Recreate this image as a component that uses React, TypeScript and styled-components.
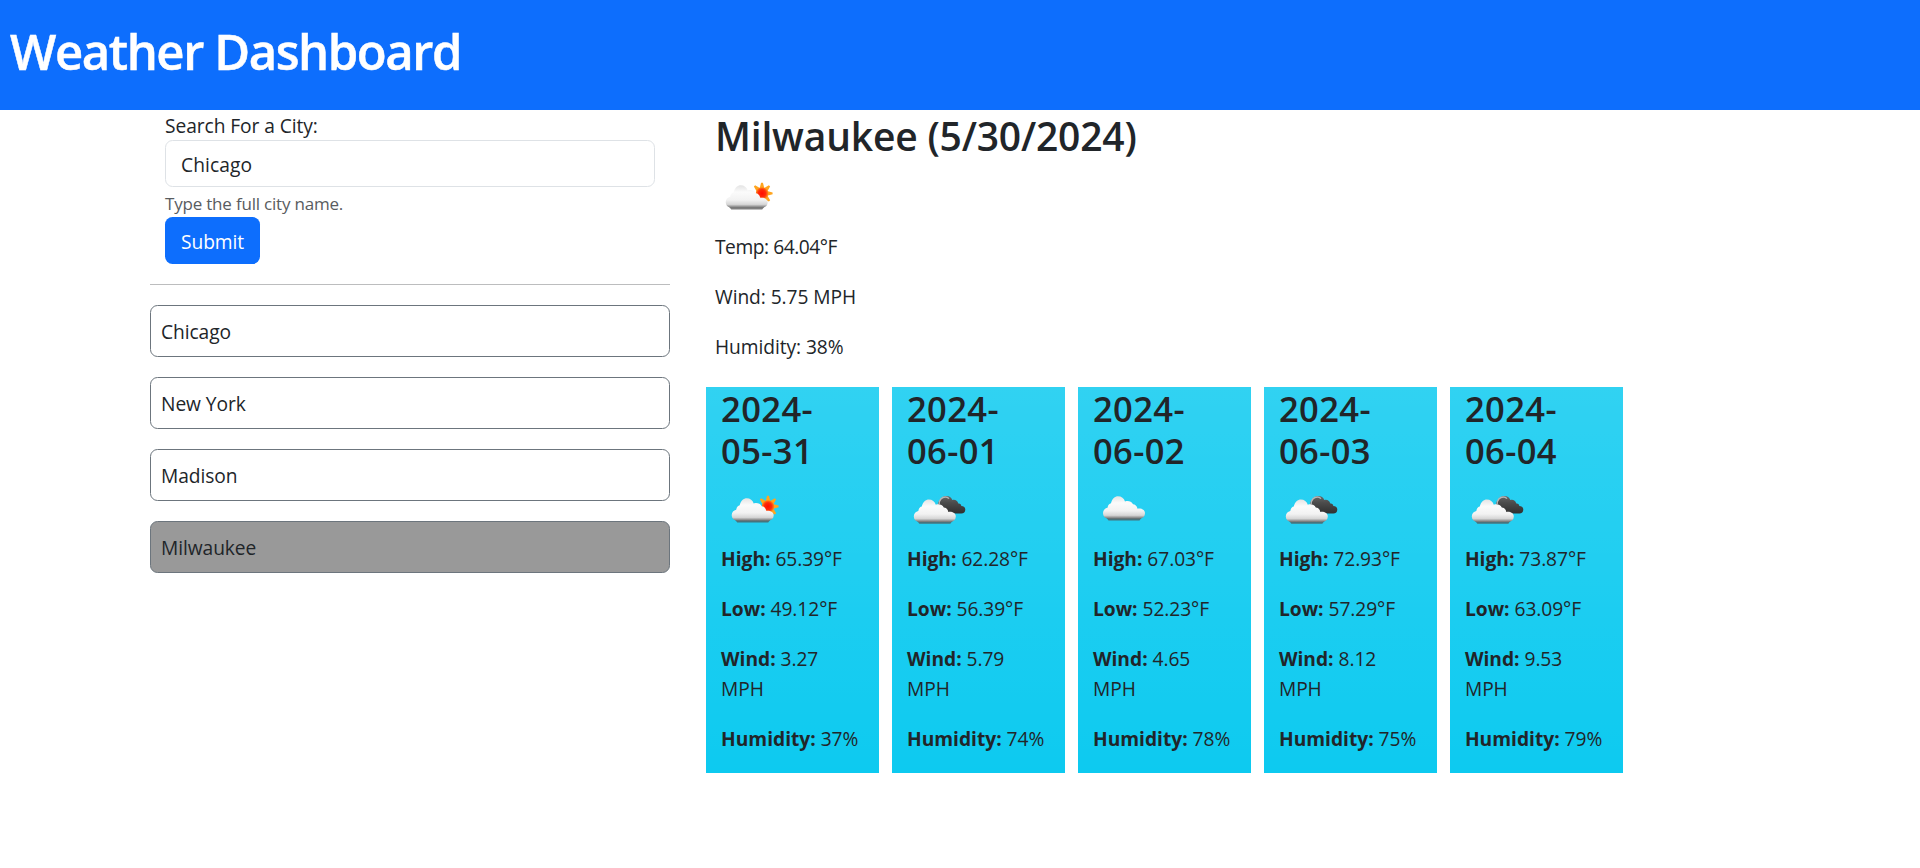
import React from 'react';
import styled, { createGlobalStyle } from 'styled-components';

const GlobalStyle = createGlobalStyle`
  *, *::before, *::after { box-sizing: border-box; }
  body {
    margin: 0;
    background: #fff;
    color: #212529;
    font-family: 'Open Sans', 'Noto Sans', sans-serif;
    font-size: 19.2px;
    font-weight: 400;
    line-height: 30px;
    letter-spacing: -0.07px;
  }
  h1, h2, h3, p { margin: 0; }
`;

const Header = styled.header`
  height: 110px;
  padding: 20px 10px;
  background: #0d6efd;
  color: #fff;
`;

const Title = styled.h1`
  font-size: 49px;
  font-weight: 600;
  line-height: 62px;
  letter-spacing: -1.43px;
  -webkit-text-stroke: 0.5px #fff;
`;

const Page = styled.main`
  display: flex;
  align-items: flex-start;
  padding-left: 150px;
`;

const Sidebar = styled.aside`
  width: 520px;
`;

const SearchForm = styled.form`
  display: flex;
  flex-direction: column;
  align-items: flex-start;
  padding: 0 15px;
`;

const Label = styled.label`
  height: 30px;
  padding-top: 1px;
`;

const SearchInput = styled.input`
  width: 100%;
  height: 47px;
  padding: 2px 15px 0;
  border: 1px solid #dee2e6;
  border-radius: 7.5px;
  background: #fff;
  color: #212529;
  font: inherit;
  letter-spacing: 0.1px;
  outline: none;
`;

const Hint = styled.span`
  height: 30px;
  padding-top: 2px;
  color: #595c5f;
  font-size: 17px;
  letter-spacing: -0.2px;
`;

const SubmitButton = styled.button`
  width: 95px;
  height: 47px;
  padding: 2px 0 0;
  border: 0;
  border-radius: 7.5px;
  background: #0d6efd;
  color: #fff;
  font: inherit;
  letter-spacing: -0.1px;
`;

const Divider = styled.hr`
  height: 1px;
  margin: 20px 0;
  border: 0;
  background: #bcbdbe;
`;

const CityList = styled.div`
  display: flex;
  flex-direction: column;
  gap: 20px;
`;

const City = styled.div<{ $active?: boolean }>`
  height: 52px;
  padding: 11px 10px 9px;
  border: 1px solid #6c757d;
  border-radius: 7.5px;
  background: ${({ $active }) => ($active ? '#999' : '#fff')};
`;

const Weather = styled.section`
  margin-left: 36px;
`;

const Current = styled.div`
  padding-left: 9px;
`;

const CityHeading = styled.h2`
  height: 58px;
  font-size: 39px;
  font-weight: 600;
  line-height: 52px;
  letter-spacing: -0.19px;
`;

const Reading = styled.p<{ $tight?: boolean }>`
  margin-bottom: 20px;
  letter-spacing: ${({ $tight }) => ($tight ? '-0.45px' : 'inherit')};
`;

const IconSvg = styled.svg`
  display: block;
  width: 62.5px;
  height: 62.5px;
`;

const CurrentIcon = styled.div`
  padding-bottom: 1px;
`;

const Forecast = styled.div`
  display: grid;
  grid-template-columns: repeat(5, 173.3px);
  column-gap: 12.7px;
  margin-top: 25.5px;
`;

const Card = styled.article`
  height: 386px;
  padding: 0 15px;
  background: linear-gradient(rgba(255, 255, 255, 0.15), rgba(255, 255, 255, 0)) #0dcaf0;
`;

const CardDate = styled.h3`
  height: 94px;
  padding-top: 1px;
  font-size: 34.5px;
  font-weight: 600;
  line-height: 42px;
  letter-spacing: 0.4px;
`;

const Name = styled.strong`
  font-weight: 700;
  letter-spacing: 0;
`;

type Sky = 'partly' | 'broken' | 'cloudy';

const CLOUD =
  'M5 22.5C2 22 0 20 0 17C0 14 2 12 4.5 11.5C5 8.5 6.5 7.3 8 7C9 2.5 12 0 15 0C18.5 0 21 2 22 5.2C25 4 28.5 5 30 8C32 8 34 9.5 34.5 12.5C38 11.8 42 13.5 42 17C42 20 40 22 37 22.5Z';

function WeatherIcon({ sky, id }: { sky: Sky; id: string }) {
  const offset =
    sky === 'broken' ? 'translate(6.8 18.5)' : sky === 'cloudy' ? 'translate(10 15.2)' : 'translate(10.7 17.3)';
  return (
    <IconSvg viewBox="0 0 62.5 62.5" aria-hidden="true">
      <defs>
        <linearGradient id={`${id}-w`} x1="0" y1="0" x2="0" y2="1">
          <stop offset="0" stopColor="#e4e4e4" />
          <stop offset="0.3" stopColor="#fbfbfb" />
          <stop offset="0.65" stopColor="#f2f2f2" />
          <stop offset="0.85" stopColor="#d6d6d6" />
          <stop offset="1" stopColor="#6e6e6e" />
        </linearGradient>
        <linearGradient id={`${id}-d`} x1="0" y1="0" x2="0" y2="1">
          <stop offset="0" stopColor="#666666" />
          <stop offset="0.4" stopColor="#4b4b4b" />
          <stop offset="1" stopColor="#303030" />
        </linearGradient>
        <radialGradient id={`${id}-s`}>
          <stop offset="0" stopColor="#ff0d00" />
          <stop offset="0.6" stopColor="#ff2b08" />
          <stop offset="1" stopColor="#ff8a1a" />
        </radialGradient>
        <filter id={`${id}-b`} x="-20%" y="-50%" width="140%" height="200%">
          <feGaussianBlur stdDeviation="0.6" />
        </filter>
      </defs>
      {sky === 'partly' && (
        <g>
          <g fill="#ffa51e">
            {[-135, -90, -45, 0, 45].map((a) => (
              <path key={a} d="M5 -2.4L10.6 -0.9V0.9L5 2.4Z" transform={`translate(47 25.4) rotate(${a})`} />
            ))}
          </g>
          <circle cx="47" cy="25.4" r="6.2" fill={`url(#${id}-s)`} />
        </g>
      )}
      {sky === 'broken' && (
        <g transform="translate(30.3 15)">
          <path
            d="M2 12C0 8 1 5 3 4C4 1 6.5 0 9 0C12 0 14 1.5 15 4C18 3.3 20 4.5 21 7.5C22.5 7.2 24 8 24 10C26.5 10 28 11.5 28 13.5C28 16 26.5 17.4 24 17.4H10Z"
            fill={`url(#${id}-d)`}
          />
          <path d="M1.8 8.4C1.6 4 4.6 1 8 1C9.5 1 10.8 1.6 11.6 2.6" fill="none" stroke="#b5b5b5" strokeWidth="1.5" />
        </g>
      )}
      <g transform={offset}>
        <path d="M3 21H39L36.5 24.2H5.5Z" fill="#555555" opacity="0.75" filter={`url(#${id}-b)`} />
        <path d={CLOUD} fill={`url(#${id}-w)`} />
      </g>
    </IconSvg>
  );
}

const cities = ['Chicago', 'New York', 'Madison', 'Milwaukee'];

const days: { date: [string, string]; sky: Sky; high: string; low: string; wind: string; humidity: string }[] = [
  { date: ['2024-', '05-31'], sky: 'partly', high: '65.39', low: '49.12', wind: '3.27', humidity: '37' },
  { date: ['2024-', '06-01'], sky: 'broken', high: '62.28', low: '56.39', wind: '5.79', humidity: '74' },
  { date: ['2024-', '06-02'], sky: 'cloudy', high: '67.03', low: '52.23', wind: '4.65', humidity: '78' },
  { date: ['2024-', '06-03'], sky: 'broken', high: '72.93', low: '57.29', wind: '8.12', humidity: '75' },
  { date: ['2024-', '06-04'], sky: 'broken', high: '73.87', low: '63.09', wind: '9.53', humidity: '79' },
];

export default function App() {
  return (
    <>
      <GlobalStyle />
      <Header>
        <Title>Weather Dashboard</Title>
      </Header>
      <Page>
        <Sidebar>
          <SearchForm onSubmit={(e) => e.preventDefault()}>
            <Label htmlFor="city">Search For a City:</Label>
            <SearchInput id="city" defaultValue="Chicago" />
            <Hint>Type the full city name.</Hint>
            <SubmitButton type="submit">Submit</SubmitButton>
          </SearchForm>
          <Divider />
          <CityList>
            {cities.map((city) => (
              <City key={city} $active={city === 'Milwaukee'}>
                {city}
              </City>
            ))}
          </CityList>
        </Sidebar>
        <Weather>
          <Current>
            <CityHeading>Milwaukee (5/30/2024)</CityHeading>
            <CurrentIcon>
              <WeatherIcon sky="partly" id="now" />
            </CurrentIcon>
            <Reading $tight>Temp: 64.04°F</Reading>
            <Reading>Wind: 5.75 MPH</Reading>
            <Reading>Humidity: 38%</Reading>
          </Current>
          <Forecast>
            {days.map((day, i) => (
              <Card key={i}>
                <CardDate>
                  {day.date[0]}
                  <br />
                  {day.date[1]}
                </CardDate>
                <WeatherIcon sky={day.sky} id={`day${i}`} />
                <Reading>
                  <Name>High:</Name> {day.high}°F
                </Reading>
                <Reading>
                  <Name>Low:</Name> {day.low}°F
                </Reading>
                <Reading>
                  <Name>Wind:</Name> {day.wind}
                  <br />
                  MPH
                </Reading>
                <Reading>
                  <Name>Humidity:</Name> {day.humidity}%
                </Reading>
              </Card>
            ))}
          </Forecast>
        </Weather>
      </Page>
    </>
  );
}
